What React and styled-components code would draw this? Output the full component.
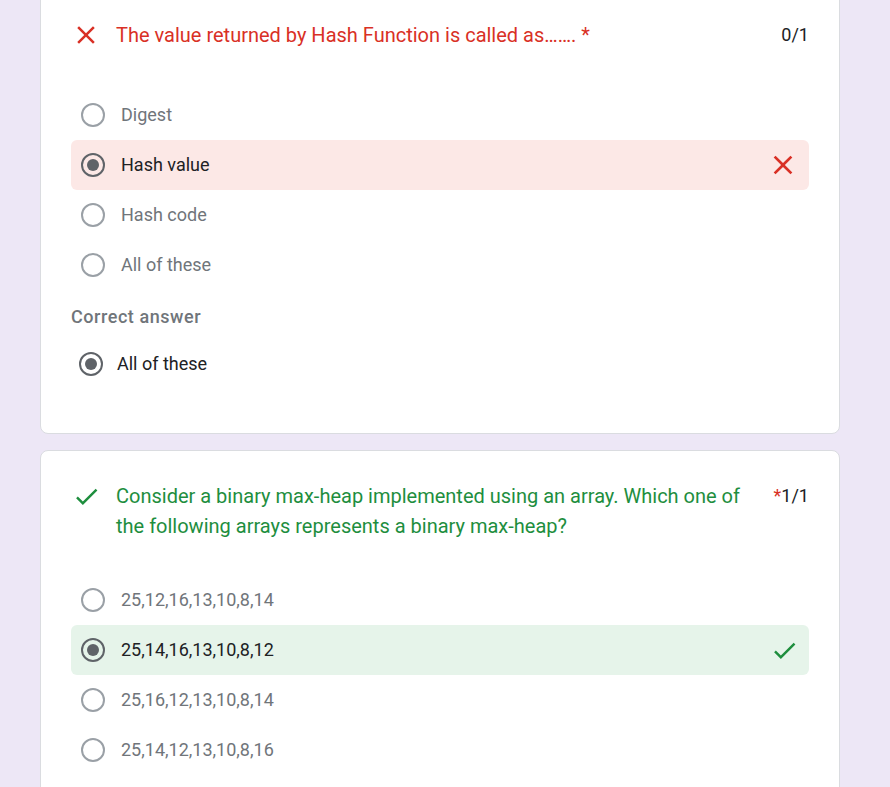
import React from 'react';
import styled, { createGlobalStyle } from 'styled-components';

const GlobalStyle = createGlobalStyle`
  html, body {
    margin: 0;
    background: #ede7f6;
    font-family: Roboto, "Noto Sans", Arial, sans-serif;
  }
`;

const Page = styled.div`
  width: 800px;
  margin: -11px 0 0 40px;
  display: flex;
  flex-direction: column;
  gap: 16px;
`;

const Card = styled.div`
  background: #fff;
  border: 1px solid #dadce0;
  border-radius: 8px;
  padding: 30px 30px ${(p) => p.bottom || 30}px;
`;

const TitleRow = styled.div`
  display: flex;
  align-items: flex-start;
  margin-bottom: ${(p) => p.gap}px;
`;

const TitleIcon = styled.div`
  width: 30px;
  height: 30px;
  margin-right: 15px;
  display: flex;
  align-items: center;
  justify-content: center;
  flex-shrink: 0;
`;

const TitleText = styled.div`
  flex: 1;
  font-size: 20px;
  line-height: 30px;
  color: ${(p) => (p.ok ? '#1e8e3e' : '#d93025')};
  padding-right: 24px;
`;

const Star = styled.span`
  color: #d93025;
`;

const Score = styled.div`
  font-size: 18px;
  line-height: 30px;
  color: #202124;
  white-space: nowrap;
`;

const Option = styled.div`
  display: flex;
  align-items: center;
  height: 50px;
  padding: 0 10px 0 10px;
  border-radius: 6px;
  background: ${(p) => (p.state === 'wrong' ? '#fce8e6' : p.state === 'right' ? '#e6f4ea' : 'transparent')};
`;

const Radio = styled.span`
  box-sizing: border-box;
  width: 24px;
  height: 24px;
  border-radius: 50%;
  border: 2px solid ${(p) => (p.checked ? '#5f6368' : '#9aa0a6')};
  display: flex;
  align-items: center;
  justify-content: center;
  flex-shrink: 0;
  &::after {
    content: '';
    display: ${(p) => (p.checked ? 'block' : 'none')};
    width: 12px;
    height: 12px;
    border-radius: 50%;
    background: #5f6368;
  }
`;

const OptionText = styled.span`
  flex: 1;
  margin-left: 16px;
  font-size: 18px;
  margin-top: -1px;
  color: ${(p) => (p.checked ? '#202124' : '#70757a')};
`;

const CorrectLabel = styled.div`
  margin-top: 15px;
  font-size: 18px;
  font-weight: 500;
  letter-spacing: 0.55px;
  color: #70757a;
  line-height: 24px;
`;

const CorrectOption = styled(Option)`
  margin-top: 10px;
  padding-left: 8px;
  & > span:last-child {
    margin-left: 14px;
  }
`;

const CloseIcon = ({ color = '#d93025' }) => (
  <svg width="32" height="32" viewBox="0 0 24 24" fill={color}>
    <path d="M19 6.41L17.59 5 12 10.59 6.41 5 5 6.41 10.59 12 5 17.59 6.41 19 12 13.41 17.59 19 19 17.59 13.41 12z" />
  </svg>
);

const CheckIcon = ({ color = '#1e8e3e' }) => (
  <svg width="29" height="29" viewBox="0 0 24 24" fill={color}>
    <path d="M9 16.17L4.83 12l-1.42 1.41L9 19 21 7l-1.41-1.41z" />
  </svg>
);

const q1 = ['Digest', 'Hash value', 'Hash code', 'All of these'];
const q2 = ['25,12,16,13,10,8,14', '25,14,16,13,10,8,12', '25,16,12,13,10,8,14', '25,14,12,13,10,8,16'];

const App = () => (
  <>
    <GlobalStyle />
    <Page>
      <Card bottom={44}>
        <TitleRow gap={40}>
          <TitleIcon>
            <CloseIcon />
          </TitleIcon>
          <TitleText>
            The value returned by Hash Function is called as……. <Star>*</Star>
          </TitleText>
          <Score>0/1</Score>
        </TitleRow>
        {q1.map((o, i) => (
          <Option key={o} state={i === 1 ? 'wrong' : null}>
            <Radio checked={i === 1} />
            <OptionText checked={i === 1}>{o}</OptionText>
            {i === 1 && <CloseIcon />}
          </Option>
        ))}
        <CorrectLabel>Correct answer</CorrectLabel>
        <CorrectOption>
          <Radio checked />
          <OptionText checked>All of these</OptionText>
        </CorrectOption>
      </Card>
      <Card bottom={60}>
        <TitleRow gap={34}>
          <TitleIcon>
            <CheckIcon />
          </TitleIcon>
          <TitleText ok>
            Consider a binary max-heap implemented using an array. Which one of the following arrays represents a binary max-heap?
          </TitleText>
          <Score>
            <Star>*</Star>1/1
          </Score>
        </TitleRow>
        {q2.map((o, i) => (
          <Option key={o} state={i === 1 ? 'right' : null}>
            <Radio checked={i === 1} />
            <OptionText checked={i === 1}>{o}</OptionText>
            {i === 1 && <CheckIcon />}
          </Option>
        ))}
      </Card>
    </Page>
  </>
);

export default App;
